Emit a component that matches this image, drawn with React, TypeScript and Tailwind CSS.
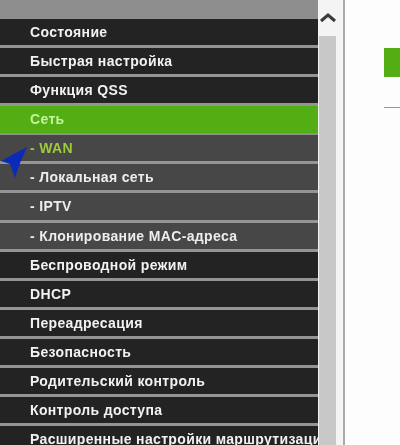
type Item = {
  label: string;
  kind?: "active" | "sub" | "subActive";
  tall?: boolean;
};

const items: Item[] = [
  { label: "Состояние" },
  { label: "Быстрая настройка" },
  { label: "Функция QSS" },
  { label: "Сеть", kind: "active" },
  { label: "- WAN", kind: "subActive" },
  { label: "- Локальная сеть", kind: "sub" },
  { label: "- IPTV", kind: "sub", tall: true },
  { label: "- Клонирование MAC-адреса", kind: "sub" },
  { label: "Беспроводной режим" },
  { label: "DHCP" },
  { label: "Переадресация" },
  { label: "Безопасность" },
  { label: "Родительский контроль" },
  { label: "Контроль доступа" },
  { label: "Расширенные настройки маршрутизации" },
];

function MenuRow({ label, kind, tall }: Item) {
  if (kind === "active") {
    return (
      <div className="h-[29px] shrink-0 border-b-2 border-b-[#8f8f8f] bg-[#52ae12] pl-[30px] leading-[26px] text-[#c4f59c] whitespace-nowrap">
        {label}
      </div>
    );
  }
  const sub = kind === "sub" || kind === "subActive";
  return (
    <div
      className={
        (tall ? "h-[30px] " : "h-[29px] ") +
        (sub
          ? "shrink-0 border-b-[3px] border-b-[#949494] bg-[#474747] pl-[30px] leading-[26px] whitespace-nowrap " +
            (kind === "subActive" ? "text-[#9ccb3c]" : "text-[#ededed]")
          : "shrink-0 border-b-[3px] border-b-[#949494] bg-[#232323] pl-[30px] leading-[26px] text-[#f2f2f2] whitespace-nowrap")
      }
    >
      {label}
    </div>
  );
}

export default function App() {
  return (
    <div className="flex h-[445px] w-[400px] overflow-hidden bg-white font-['Liberation_Sans',Arial,sans-serif]">
      <div className="relative flex h-full w-[318px] shrink-0 flex-col overflow-hidden text-[14px] font-bold tracking-[0.35px] blur-[0.35px]">
        <div className="h-[19px] shrink-0 bg-[#8e8e8e]" />
        {items.map((item) => (
          <MenuRow key={item.label} {...item} />
        ))}
        <svg
          className="absolute left-0 top-[146px]"
          width="30"
          height="34"
          viewBox="0 0 30 34"
        >
          <path d="M27 1 L1 15 L10 18 L15 32 L20 17 Z" fill="#0b2ab8" />
        </svg>
      </div>

      <div className="flex h-full w-[25px] shrink-0 flex-col bg-[#f4f4f4] pl-[1px] pr-[7px]">
        <div className="flex h-[36px] shrink-0 items-center justify-center">
          <svg width="16" height="10" viewBox="0 0 16 10" fill="none">
            <path d="M1 8 L8 2 L15 8" stroke="#3a3a3a" strokeWidth="3" />
          </svg>
        </div>
        <div className="flex-1 bg-[#c8c8c8]" />
      </div>

      <div className="h-full w-[2px] shrink-0 bg-[#a9a9a9]" />

      <div className="flex-1 bg-[#fdfdfd] pl-[39px] pt-[48px]">
        <div className="h-[29px] bg-[#52ae12]" />
        <div className="mt-[30px] h-[1px] bg-[#8f9a8f]" />
      </div>
    </div>
  );
}
